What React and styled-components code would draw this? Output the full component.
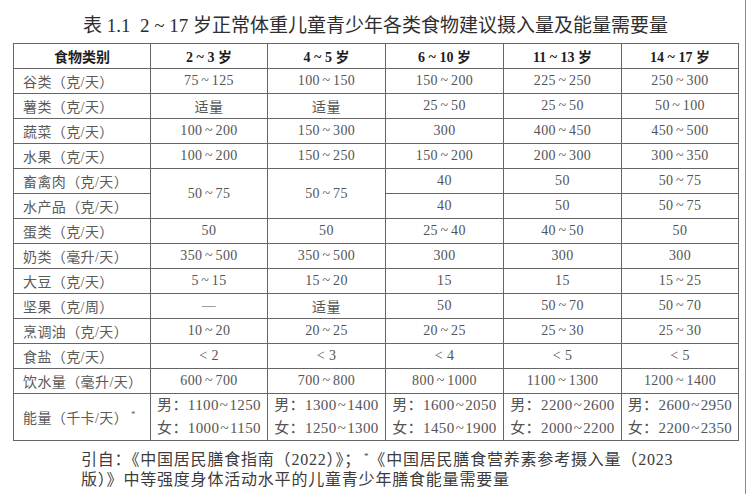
import React from "react";
import styled, { createGlobalStyle } from "styled-components";

const Global = createGlobalStyle`
  html, body { margin: 0; padding: 0; background: #fff; }
  body { font-family: "Liberation Serif", "Noto Sans CJK SC", serif; }
`;

const Page = styled.div`
  width: 746px;
  height: 494px;
  border-right: 1px solid #8a8a8a;
  box-sizing: border-box;
  padding-left: 13px;
  overflow: hidden;
`;

const Title = styled.h1`
  margin: 0;
  width: 725px;
  padding-top: 14px;
  height: 29px;
  line-height: 24px;
  text-align: center;
  font-size: 19px;
  font-weight: normal;
  color: #2e2e2e;
  letter-spacing: 0;
  white-space: nowrap;
`;

const Table = styled.table`
  border-collapse: collapse;
  table-layout: fixed;
  width: 725px;
`;

const Th = styled.th`
  border: 1px solid #666;
  height: 24px;
  padding: 0;
  font-size: 14px;
  font-weight: bold;
  color: #1e1e1e;
  text-align: center;
  white-space: nowrap;
`;

const Label = styled.td`
  border: 1px solid #666;
  height: ${(p) => (p.$tall ? "45px" : "24px")};
  padding: 0 0 0 9px;
  font-size: 14px;
  color: #5a5a5a;
  text-align: left;
  white-space: nowrap;
  letter-spacing: 0.4px;
`;

const Cell = styled.td`
  border: 1px solid #666;
  padding: 0;
  font-size: ${(p) => (p.$energy ? "15px" : "14px")};
  line-height: ${(p) => (p.$energy ? "23px" : "normal")};
  color: #545454;
  text-align: center;
  white-space: nowrap;
  letter-spacing: ${(p) => (p.$energy ? "0.4px" : "0.4px")};
`;

const Tilde = styled.span`
  margin: 0 ${(p) => (p.$tight ? "1px" : "2.5px")};
`;

const Star = styled.sup`
  font-size: 9px;
  vertical-align: 6px;
  margin-left: 3px;
`;

const Note = styled.div`
  width: 596px;
  margin: 0 auto;
  padding-top: 5px;
  font-size: 16px;
  line-height: 20px;
  color: #3c3c3c;
  letter-spacing: 0.8px;
  white-space: nowrap;
`;

const NoteLine = styled.div``;

const Range = ({ v, tight }) => {
  if (!v.includes("~")) return v;
  const [a, b] = v.split("~");
  return (
    <>
      {a}
      <Tilde $tight={tight}>~</Tilde>
      {b}
    </>
  );
};

const heads = ["食物类别", "2 ~ 3 岁", "4 ~ 5 岁", "6 ~ 10 岁", "11 ~ 13 岁", "14 ~ 17 岁"];

const rows = [
  ["谷类（克/天）", ["75~125", "100~150", "150~200", "225~250", "250~300"]],
  ["薯类（克/天）", ["适量", "适量", "25~50", "25~50", "50~100"]],
  ["蔬菜（克/天）", ["100~200", "150~300", "300", "400~450", "450~500"]],
  ["水果（克/天）", ["100~200", "150~250", "150~200", "200~300", "300~350"]],
  ["畜禽肉（克/天）", [{ v: "50~75", rs: 2 }, { v: "50~75", rs: 2 }, "40", "50", "50~75"]],
  ["水产品（克/天）", ["40", "50", "50~75"]],
  ["蛋类（克/天）", ["50", "50", "25~40", "40~50", "50"]],
  ["奶类（毫升/天）", ["350~500", "350~500", "300", "300", "300"]],
  ["大豆（克/天）", ["5~15", "15~20", "15", "15", "15~25"]],
  ["坚果（克/周）", ["—", "适量", "50", "50~70", "50~70"]],
  ["烹调油（克/天）", ["10~20", "20~25", "20~25", "25~30", "25~30"]],
  ["食盐（克/天）", ["< 2", "< 3", "< 4", "< 5", "< 5"]],
  ["饮水量（毫升/天）", ["600~700", "700~800", "800~1000", "1100~1300", "1200~1400"]],
];

const energy = [
  ["1100~1250", "1000~1150"],
  ["1300~1400", "1250~1300"],
  ["1600~2050", "1450~1900"],
  ["2200~2600", "2000~2200"],
  ["2600~2950", "2200~2350"],
];

export default function App() {
  return (
    <>
      <Global />
      <Page>
        <Title>表 1.1&nbsp; 2 ~ 17 岁正常体重儿童青少年各类食物建议摄入量及能量需要量</Title>
        <Table>
          <colgroup>
            <col style={{ width: 137 }} />
            <col style={{ width: 117 }} />
            <col style={{ width: 118 }} />
            <col style={{ width: 118 }} />
            <col style={{ width: 118 }} />
            <col style={{ width: 117 }} />
          </colgroup>
          <thead>
            <tr>
              {heads.map((h) => (
                <Th key={h}>{h}</Th>
              ))}
            </tr>
          </thead>
          <tbody>
            {rows.map(([label, vals]) => (
              <tr key={label}>
                <Label>{label}</Label>
                {vals.map((c, i) =>
                  typeof c === "string" ? (
                    <Cell key={i}>
                      <Range v={c} />
                    </Cell>
                  ) : (
                    <Cell key={i} rowSpan={c.rs}>
                      <Range v={c.v} />
                    </Cell>
                  )
                )}
              </tr>
            ))}
            <tr>
              <Label $tall>
                能量（千卡/天）<Star>*</Star>
              </Label>
              {energy.map(([m, f], i) => (
                <Cell key={i} $energy>
                  <div>
                    男：<Range v={m} tight />
                  </div>
                  <div>
                    女：<Range v={f} tight />
                  </div>
                </Cell>
              ))}
            </tr>
          </tbody>
        </Table>
        <Note>
          <NoteLine>
            引自：《中国居民膳食指南（2022）》；<Star>*</Star>《中国居民膳食营养素参考摄入量（2023
          </NoteLine>
          <NoteLine>版）》中等强度身体活动水平的儿童青少年膳食能量需要量</NoteLine>
        </Note>
      </Page>
    </>
  );
}
